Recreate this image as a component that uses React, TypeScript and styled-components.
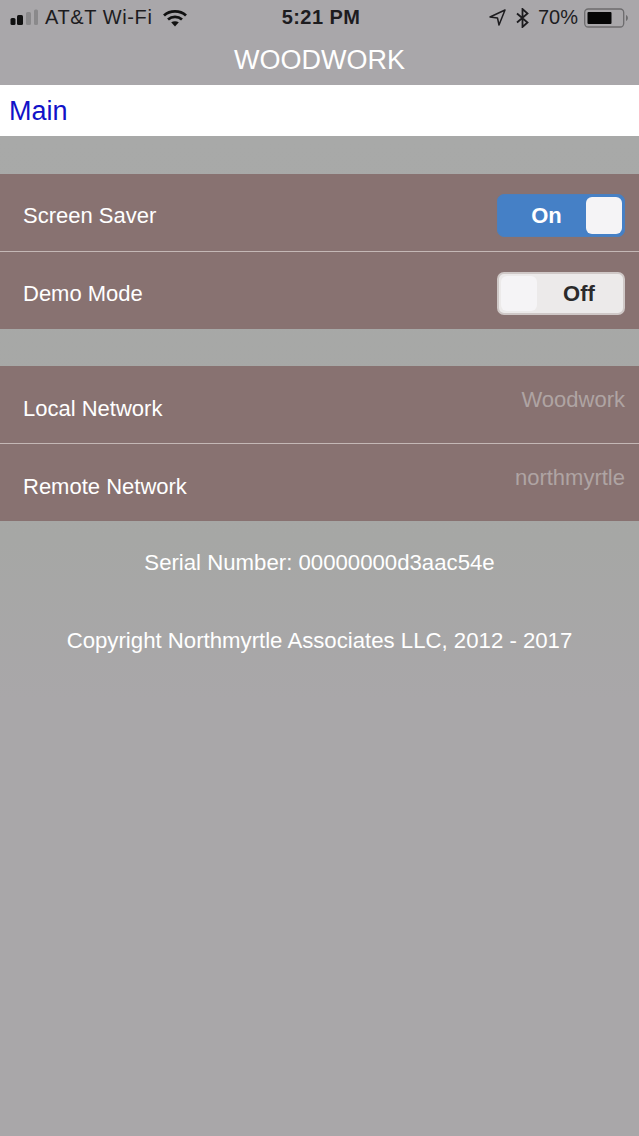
import React from "react";
import styled, { createGlobalStyle } from "styled-components";

const GlobalStyle = createGlobalStyle`
  html, body {
    margin: 0;
    padding: 0;
    background: #a9a7a9;
  }
  body {
    font-family: "Liberation Sans", Arial, sans-serif;
  }
`;

const Screen = styled.div`
  width: 639px;
  height: 1136px;
  overflow: hidden;
  display: flex;
  flex-direction: column;
  background: linear-gradient(#a8a9a8 140px, #a6a7a5 540px, #a9a7a9 700px);
`;

const StatusBar = styled.div`
  height: 36px;
  flex: none;
  box-sizing: border-box;
  display: grid;
  grid-template-columns: 1fr auto 1fr;
  align-items: center;
  padding: 0 9px 1px 10px;
  color: #1d1c1f;
  font-size: 20px;
  background: #a9a7aa;
`;

const StatusLeft = styled.div`
  display: flex;
  align-items: center;
`;

const Carrier = styled.span`
  margin: 0 11px 0 7px;
  letter-spacing: 0.6px;
`;

const StatusRight = styled.div`
  display: flex;
  align-items: center;
  justify-content: flex-end;
`;

const Percent = styled.span`
  margin: 0 6px 0 9px;
`;

const BluetoothSlot = styled.span`
  display: flex;
  margin-left: 10px;
`;

const Clock = styled.div`
  font-weight: 700;
  font-size: 20px;
  letter-spacing: 0.45px;
  margin-left: 2px;
`;

const NavTitle = styled.div`
  height: 49px;
  flex: none;
  display: flex;
  align-items: center;
  justify-content: center;
  color: #fff;
  font-size: 27px;
  background: #a9a7aa;
`;

const MainBar = styled.div`
  height: 51px;
  flex: none;
  box-sizing: border-box;
  display: flex;
  align-items: center;
  padding: 2px 0 0 9px;
  background: #fff;
  color: #1212c8;
  font-size: 27px;
`;

const Group = styled.div<{ $top: number }>`
  margin-top: ${(p) => p.$top}px;
  display: flex;
  flex-direction: column;
  background: #887271;
`;

const Row = styled.div<{ $divider?: boolean }>`
  height: ${(p) => (p.$divider ? 78 : 77)}px;
  box-sizing: border-box;
  display: flex;
  justify-content: space-between;
  align-items: center;
  padding: 6px 14px 0 23px;
  color: #fff;
  font-size: 22px;
  border-top: ${(p) => (p.$divider ? "1px solid #c4b8b6" : "none")};
`;

const NetworkLabel = styled.span`
  padding-top: 3px;
`;

const NetworkValue = styled.span`
  color: #afa4a3;
  font-size: 22px;
  padding-bottom: 15px;
`;

const Toggle = styled.div<{ $on: boolean }>`
  width: 128px;
  height: 43px;
  box-sizing: border-box;
  padding: 2px;
  display: flex;
  flex-direction: ${(p) => (p.$on ? "row" : "row-reverse")};
  align-items: stretch;
  border-radius: 7px;
  background: ${(p) => (p.$on ? "#4580c6" : "#eceaea")};
  border: ${(p) => (p.$on ? "1px solid #4a7fbe" : "2px solid #cfc8c7")};
`;

const ToggleLabel = styled.span<{ $on: boolean }>`
  flex: 1;
  display: flex;
  align-items: center;
  justify-content: center;
  padding-left: ${(p) => (p.$on ? 7 : 0)}px;
  font-size: 22px;
  font-weight: 700;
  color: ${(p) => (p.$on ? "#fff" : "#2b2a2b")};
`;

const ToggleKnob = styled.span`
  width: 36px;
  border-radius: 6px;
  background: #f5f4f6;
`;

const InfoText = styled.div<{ $top: number }>`
  margin-top: ${(p) => p.$top}px;
  text-align: center;
  color: #fff;
  font-size: 22.2px;
  line-height: 26px;
`;

const Signal = () => (
  <svg width="28" height="17" viewBox="0 0 28 17">
    <rect x="0.5" y="9" width="5" height="7" rx="1.5" fill="#111" />
    <rect x="7" y="6" width="6" height="10" rx="1.5" fill="#111" />
    <rect x="16" y="3" width="5" height="13" rx="1.5" fill="#8a898b" />
    <rect x="24" y="0.5" width="4" height="15.5" rx="1.5" fill="#8a898b" />
  </svg>
);

const Wifi = () => (
  <svg width="24" height="18" viewBox="0 0 24 18">
    <path d="M1 6.5 C7 1 17 1 23 6.5" fill="none" stroke="#111" strokeWidth="2.8" />
    <path d="M5 10.5 C9 7 15 7 19 10.5" fill="none" stroke="#111" strokeWidth="2.8" />
    <path d="M8.2 13.2 C10.5 11.8 13.5 11.8 15.8 13.2 L12 17.5 Z" fill="#111" />
  </svg>
);

const Location = () => (
  <svg width="17" height="17" viewBox="0 0 17 17">
    <path d="M16 1 L1 8 L8.5 9 L10 16 Z" fill="none" stroke="#1d1c1f" strokeWidth="1.5" strokeLinejoin="round" />
  </svg>
);

const Bluetooth = () => (
  <svg width="13" height="20" viewBox="0 0 13 20">
    <path d="M1 5.5 L11.5 14.5 L6.5 19 L6.5 1 L11.5 5.5 L1 14.5" fill="none" stroke="#1d1c1f" strokeWidth="1.8" />
  </svg>
);

const Battery = () => (
  <svg width="46" height="20" viewBox="0 0 46 20">
    <rect x="0.7" y="1" width="39" height="18" rx="3.5" fill="none" stroke="#6d6c6e" strokeWidth="1.3" />
    <rect x="3.5" y="4" width="24" height="12" rx="1" fill="#050505" />
    <path d="M42 7 C44.5 8 44.5 12 42 13 Z" fill="#6d6c6e" />
  </svg>
);

export default function App() {
  return (
    <Screen>
      <GlobalStyle />
      <StatusBar>
        <StatusLeft>
          <Signal />
          <Carrier>AT&amp;T Wi-Fi</Carrier>
          <Wifi />
        </StatusLeft>
        <Clock>5:21 PM</Clock>
        <StatusRight>
          <Location />
          <BluetoothSlot>
            <Bluetooth />
          </BluetoothSlot>
          <Percent>70%</Percent>
          <Battery />
        </StatusRight>
      </StatusBar>
      <NavTitle>WOODWORK</NavTitle>
      <MainBar>Main</MainBar>
      <Group $top={38}>
        <Row>
          Screen Saver
          <Toggle $on>
            <ToggleLabel $on>On</ToggleLabel>
            <ToggleKnob />
          </Toggle>
        </Row>
        <Row $divider>
          Demo Mode
          <Toggle $on={false}>
            <ToggleLabel $on={false}>Off</ToggleLabel>
            <ToggleKnob />
          </Toggle>
        </Row>
      </Group>
      <Group $top={37}>
        <Row>
          <NetworkLabel>Local Network</NetworkLabel>
          <NetworkValue>Woodwork</NetworkValue>
        </Row>
        <Row $divider>
          <NetworkLabel>Remote Network</NetworkLabel>
          <NetworkValue>northmyrtle</NetworkValue>
        </Row>
      </Group>
      <InfoText $top={29}>Serial Number: 00000000d3aac54e</InfoText>
      <InfoText $top={52}>Copyright Northmyrtle Associates LLC, 2012 - 2017</InfoText>
    </Screen>
  );
}
